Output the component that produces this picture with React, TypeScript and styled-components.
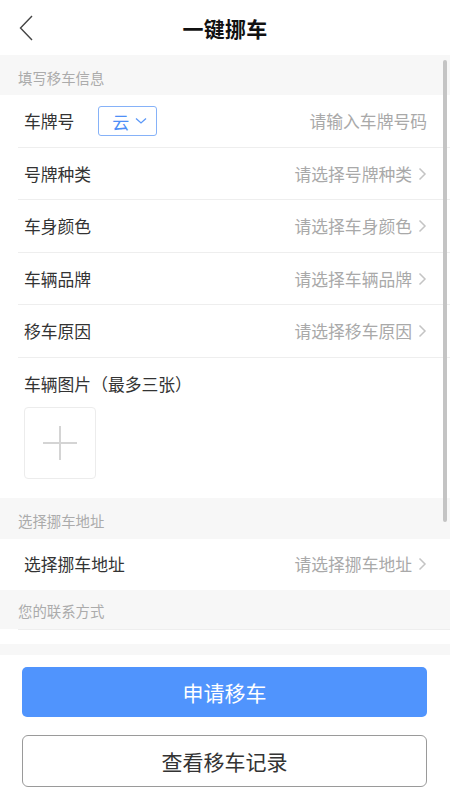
import React from "react";
import styled, { createGlobalStyle } from "styled-components";

const GlobalStyle = createGlobalStyle`
    html, body {
        margin: 0;
        padding: 0;
        background: #fff;
        font-family: "Noto Sans CJK SC", "Noto Sans", sans-serif;
    }
`;

const infoRows = [
    { label: "号牌种类", placeholder: "请选择号牌种类" },
    { label: "车身颜色", placeholder: "请选择车身颜色" },
    { label: "车辆品牌", placeholder: "请选择车辆品牌" },
    { label: "移车原因", placeholder: "请选择移车原因" },
];

const ChevronRight = () => (
    <svg width="9" height="14" viewBox="0 0 9 14">
        <path d="M1.5 1.5 L7 7 L1.5 12.5" fill="none" stroke="#c4c4c4" strokeWidth="1.5" />
    </svg>
);

const App = () => {
    return (
        <Page>
            <GlobalStyle />
            <Header>
                <BackBtn>
                    <svg width="14" height="26" viewBox="0 0 14 26">
                        <path d="M13 1 L1.5 13 L13 25" fill="none" stroke="#444" strokeWidth="1.4" />
                    </svg>
                </BackBtn>
                <Title>一键挪车</Title>
            </Header>

            <ScrollArea>
                <Scroller>
                    <SectionTitle>填写移车信息</SectionTitle>
                    <Row $line>
                        <Label>车牌号</Label>
                        <PlatePicker>
                            云
                            <svg width="12" height="8" viewBox="0 0 12 8">
                                <path d="M1 1.5 L6 6 L11 1.5" fill="none" stroke="#5b98f8" strokeWidth="1.3" />
                            </svg>
                        </PlatePicker>
                        <PlateInput placeholder="请输入车牌号码" />
                    </Row>
                    {infoRows.map((r) => (
                        <Row key={r.label} $line>
                            <Label>{r.label}</Label>
                            <Value>
                                {r.placeholder}
                                <ChevronRight />
                            </Value>
                        </Row>
                    ))}
                    <PhotoBlock>
                        <Label>车辆图片（最多三张）</Label>
                        <UploadBox />
                    </PhotoBlock>

                    <SectionTitle $tall>选择挪车地址</SectionTitle>
                    <Row $short>
                        <Label>选择挪车地址</Label>
                        <Value>
                            请选择挪车地址
                            <ChevronRight />
                        </Value>
                    </Row>

                    <SectionTitle $low>您的联系方式</SectionTitle>
                    <ContactGroup />
                </Scroller>
                <ScrollThumb />
            </ScrollArea>

            <Footer>
                <PrimaryButton>申请移车</PrimaryButton>
                <OutlineButton>查看移车记录</OutlineButton>
            </Footer>
        </Page>
    );
};

export default App;

const Page = styled.div`
    display: flex;
    flex-direction: column;
    width: 450px;
    height: 800px;
    overflow: hidden;
    background: #fff;
`;

const Header = styled.header`
    display: flex;
    align-items: center;
    justify-content: center;
    position: relative;
    height: 55px;
    flex-shrink: 0;
    background: #fff;
`;

const BackBtn = styled.div`
    position: absolute;
    left: 19px;
    top: 15px;
    display: flex;
`;

const Title = styled.h1`
    margin: 0;
    font-size: 21px;
    font-weight: 700;
    color: #111;
    letter-spacing: 0.3px;
`;

const ScrollArea = styled.div`
    position: relative;
    height: 589px;
    flex-shrink: 0;
`;

const Scroller = styled.main`
    height: 100%;
    overflow-y: auto;
    background: #f7f7f7;

    &::-webkit-scrollbar {
        display: none;
    }
`;

const ScrollThumb = styled.div`
    position: absolute;
    right: 3px;
    top: 5px;
    width: 4px;
    height: 462px;
    border-radius: 2px;
    background: #c4c4c4;
`;

const SectionTitle = styled.div<{ $tall?: boolean; $low?: boolean }>`
    display: flex;
    align-items: center;
    height: ${(p) => (p.$tall ? "41px" : p.$low ? "39px" : "40px")};
    padding-left: 18px;
    padding-top: ${(p) => (p.$low ? "2px" : "5px")};
    box-sizing: border-box;
    font-size: 14.4px;
    color: #ababab;
    background: #f7f7f7;
`;

const Row = styled.div<{ $line?: boolean; $short?: boolean }>`
    display: flex;
    align-items: center;
    height: ${(p) => (p.$short ? "51px" : "52.5px")};
    box-sizing: border-box;
    padding: 0 23px 0 24px;
    background: #fff;
    background-image: ${(p) =>
        p.$line ? "linear-gradient(#eee, #eee)" : "none"};
    background-repeat: no-repeat;
    background-size: calc(100% - 18px) 1px;
    background-position: 18px 100%;
`;

const Label = styled.span`
    font-size: 16.8px;
    color: #333;
    white-space: nowrap;
`;

const Value = styled.span`
    display: flex;
    align-items: center;
    gap: 6px;
    margin-left: auto;
    font-size: 16.8px;
    color: #a9a9a9;
`;

const PlatePicker = styled.div`
    display: flex;
    align-items: center;
    gap: 6px;
    margin-left: 24px;
    width: 59px;
    height: 30px;
    box-sizing: border-box;
    padding-left: 13px;
    border: 1px solid #86b2f8;
    border-radius: 3px;
    font-size: 17px;
    color: #4e8ff7;
`;

const PlateInput = styled.input`
    flex: 1;
    min-width: 0;
    border: none;
    outline: none;
    background: transparent;
    text-align: right;
    padding: 0;
    font-family: inherit;
    font-size: 16.8px;
    color: #333;

    &::placeholder {
        color: #a9a9a9;
    }
`;

const PhotoBlock = styled.div`
    display: flex;
    flex-direction: column;
    align-items: flex-start;
    gap: 11px;
    height: 140px;
    box-sizing: border-box;
    padding: 14px 24px 0;
    background: #fff;
`;

const UploadBox = styled.div`
    position: relative;
    width: 72px;
    height: 72px;
    box-sizing: border-box;
    border: 1px solid #ececec;
    border-radius: 4px;

    &::before,
    &::after {
        content: "";
        position: absolute;
        left: 50%;
        top: 50%;
        background: #d4d4d4;
        transform: translate(-50%, -50%);
    }
    &::before {
        width: 34px;
        height: 2px;
    }
    &::after {
        width: 2px;
        height: 34px;
    }
`;

const ContactGroup = styled.div`
    height: 120px;
    background: #fff;
    background-image: linear-gradient(#eee, #eee);
    background-repeat: no-repeat;
    background-size: calc(100% - 18px) 1px;
    background-position: 18px 0;
`;

const Footer = styled.footer`
    display: flex;
    flex-direction: column;
    gap: 18px;
    flex: 1;
    padding: 12px 23px 0 22px;
    border-top: 11px solid #f7f7f7;
    background: #fff;
`;

const PrimaryButton = styled.button`
    height: 50px;
    border: none;
    border-radius: 5px;
    background: #5094fd;
    color: #fff;
    font-family: inherit;
    font-size: 21px;
`;

const OutlineButton = styled.button`
    height: 52px;
    border: 1px solid #9a9a9a;
    border-radius: 6px;
    background: #fff;
    color: #333;
    font-family: inherit;
    font-size: 21px;
`;
